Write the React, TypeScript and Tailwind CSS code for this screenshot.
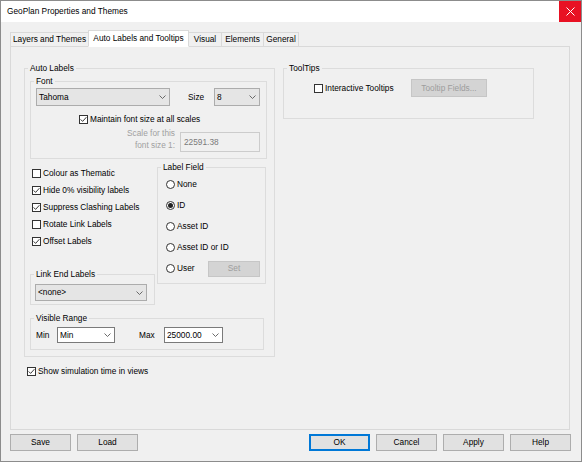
import React from 'react';

function Chevron() {
  return (
    <svg width="7" height="4" viewBox="0 0 7 4">
      <path d="M0.5 0.5 L3.5 3.5 L6.5 0.5" fill="none" stroke="#5a5a5a" strokeWidth="0.9" />
    </svg>
  );
}

function Combo({ value, className, editable }: { value: string; className: string; editable?: boolean }) {
  return (
    <div
      className={`flex items-center justify-between border pl-[2px] pr-[3px] ${
        editable ? 'bg-white border-[#7a7a7a]' : 'bg-[#e5e5e5] border-[#acacac]'
      } ${className}`}
    >
      <span>{value}</span>
      <Chevron />
    </div>
  );
}

function CheckBox({ checked, label }: { checked?: boolean; label: string }) {
  return (
    <div className="flex items-center">
      <div className="w-[9px] h-[9px] border border-[#333333] bg-white flex items-center justify-center">
        {checked && (
          <svg width="7" height="7" viewBox="0 0 7 7">
            <path d="M0.6 3.4 L2.6 5.4 L6.4 1.2" fill="none" stroke="#222222" strokeWidth="0.9" />
          </svg>
        )}
      </div>
      <span className="ml-[2px]">{label}</span>
    </div>
  );
}

function Radio({ checked, label }: { checked?: boolean; label: string }) {
  return (
    <div className="flex items-center">
      <div className="w-[9px] h-[9px] rounded-full border border-[#333333] bg-white flex items-center justify-center">
        {checked && <div className="w-[5px] h-[5px] rounded-full bg-[#222222]" />}
      </div>
      <span className="ml-[2px]">{label}</span>
    </div>
  );
}

function Legend({ children }: { children: React.ReactNode }) {
  return <legend className="ml-[3px] px-[2px] h-[10px] leading-[10px]">{children}</legend>;
}

function Button({ label, className }: { label: string; className?: string }) {
  return (
    <div
      className={`w-[61px] h-[17px] flex items-center justify-center border bg-[#e1e1e1] ${
        className ?? 'border-[#adadad]'
      }`}
    >
      {label}
    </div>
  );
}

const tabs = [
  { label: 'Layers and Themes', w: 'w-[79px]' },
  { label: 'Auto Labels and Tooltips', w: 'w-[101px]', active: true },
  { label: 'Visual', w: 'w-[34px]' },
  { label: 'Elements', w: 'w-[43px]' },
  { label: 'General', w: 'w-[36px]' },
];

export default function App() {
  return (
    <div className="w-[582px] h-[462px] border border-[#8c8c8c] bg-[#f0f0f0] flex flex-col overflow-hidden text-black text-[8.3px] leading-[11px] font-['Liberation_Sans',Arial,sans-serif]">
      {/* title bar */}
      <div className="h-[21px] shrink-0 bg-white flex items-center">
        <span className="ml-[6px]">GeoPlan Properties and Themes</span>
        <div className="ml-auto w-[22px] h-[21px] bg-[#e81123] flex items-center justify-center">
          <svg width="9" height="9" viewBox="0 0 9 9">
            <path d="M0.5 0.5 L8.5 8.5 M8.5 0.5 L0.5 8.5" stroke="white" strokeWidth="1" />
          </svg>
        </div>
      </div>

      {/* tabs */}
      <div className="mt-[8px] ml-[9px] h-[16px] flex items-end shrink-0">
        {tabs.map((t, i) => (
          <div
            key={t.label}
            className={`${t.w} flex items-center justify-center border border-[#d9d9d9] ${i > 0 ? '-ml-px' : ''} ${
              t.active ? 'h-[17px] -mb-px bg-white border-b-white relative z-10' : 'h-[14px] bg-[#f0f0f0] border-b-0'
            }`}
          >
            {t.label}
          </div>
        ))}
      </div>

      {/* tab page */}
      <div className="ml-[9px] w-[560px] h-[384px] shrink-0 border border-[#d9d9d9] flex items-start">
        <div className="ml-[13px] mt-[16px] flex flex-col">
          <fieldset className="w-[251px] h-[294px] border border-[#dcdcdc]">
            <Legend>Auto Labels</Legend>

            <fieldset className="ml-[5px] mt-[3px] w-[237px] h-[83px] border border-[#dcdcdc]">
              <Legend>Font</Legend>
              <div className="ml-[5px] mt-[2px] h-[18px] flex items-center">
                <Combo value="Tahoma" className="w-[134px] h-[18px]" />
                <span className="ml-[18px] w-[26px]">Size</span>
                <Combo value="8" className="w-[46px] h-[18px]" />
              </div>
              <div className="ml-[48px] mt-[8px] h-[10px] flex items-center">
                <CheckBox checked label="Maintain font size at all scales" />
              </div>
              <div className="mt-[3px] flex items-start">
                <div className="w-[144px] text-right leading-[12px] text-[#a0a0a0]">
                  Scale for this
                  <br />
                  font size 1:
                </div>
                <div className="ml-[5px] mt-[5px] w-[80px] h-[20px] border border-[#cccccc] bg-[#f0f0f0] text-[#7a7a7a] flex items-center pl-[3px]">
                  22591.38
                </div>
              </div>
            </fieldset>

            <div className="flex items-start">
              <div className="ml-[5px] w-[127px] flex flex-col">
                <div className="mt-[6px] pl-[2px] flex flex-col">
                  <div className="h-[17px] flex items-center">
                    <CheckBox label="Colour as Thematic" />
                  </div>
                  <div className="h-[17px] flex items-center">
                    <CheckBox checked label="Hide 0% visibility labels" />
                  </div>
                  <div className="h-[17px] flex items-center">
                    <CheckBox checked label="Suppress Clashing Labels" />
                  </div>
                  <div className="h-[17px] flex items-center">
                    <CheckBox label="Rotate Link Labels" />
                  </div>
                  <div className="h-[17px] flex items-center">
                    <CheckBox checked label="Offset Labels" />
                  </div>
                </div>
                <fieldset className="mt-[19px] w-[125px] h-[36px] border border-[#dcdcdc]">
                  <Legend>Link End Labels</Legend>
                  <div className="ml-[4px] mt-[5px]">
                    <Combo value="<none>" className="w-[112px] h-[17px]" />
                  </div>
                </fieldset>
              </div>

              <fieldset className="mt-[3px] w-[109px] h-[122px] border border-[#dcdcdc]">
                <Legend>Label Field</Legend>
                <div className="ml-[8px] mt-[2px] flex flex-col">
                  <div className="h-[21px] flex items-center">
                    <Radio label="None" />
                  </div>
                  <div className="h-[21px] flex items-center">
                    <Radio checked label="ID" />
                  </div>
                  <div className="h-[21px] flex items-center">
                    <Radio label="Asset ID" />
                  </div>
                  <div className="h-[21px] flex items-center">
                    <Radio label="Asset ID or ID" />
                  </div>
                  <div className="h-[21px] flex items-center">
                    <Radio label="User" />
                    <div className="ml-auto mr-[5px] w-[52px] h-[16px] flex items-center justify-center border border-[#c6c6c6] bg-[#d4d4d4] text-[#9d9d9d]">
                      Set
                    </div>
                  </div>
                </div>
              </fieldset>
            </div>

            <fieldset className="ml-[5px] mt-[8px] w-[234px] h-[37px] border border-[#dcdcdc]">
              <Legend>Visible Range</Legend>
              <div className="ml-[5px] mt-[4px] h-[16px] flex items-center">
                <span className="w-[21px]">Min</span>
                <Combo editable value="Min" className="w-[58px] h-[16px]" />
                <span className="ml-[24px] w-[25px]">Max</span>
                <Combo editable value="25000.00" className="w-[59px] h-[16px]" />
              </div>
            </fieldset>
          </fieldset>

          <div className="ml-[3px] mt-[7px] h-[14px] flex items-center">
            <CheckBox checked label="Show simulation time in views" />
          </div>
        </div>

        <fieldset className="ml-[8px] mt-[16px] w-[251px] h-[56px] border border-[#dcdcdc]">
          <Legend>ToolTips</Legend>
          <div className="mt-[6px] h-[18px] flex items-center">
            <div className="ml-[30px] w-[97px]">
              <CheckBox label="Interactive Tooltips" />
            </div>
            <div className="w-[76px] h-[18px] flex items-center justify-center border border-[#c6c6c6] bg-[#d4d4d4] text-[#9d9d9d]">
              Tooltip Fields...
            </div>
          </div>
        </fieldset>
      </div>

      {/* dialog buttons */}
      <div className="mt-[4px] ml-[9px] mr-[10px] h-[17px] shrink-0 flex">
        <div className="flex gap-[6px]">
          <Button label="Save" />
          <Button label="Load" />
        </div>
        <div className="ml-auto flex gap-[6px]">
          <Button label="OK" className="border-[#0078d7] shadow-[inset_0_0_0_1px_#0078d7]" />
          <Button label="Cancel" />
          <Button label="Apply" />
          <Button label="Help" />
        </div>
      </div>
    </div>
  );
}
